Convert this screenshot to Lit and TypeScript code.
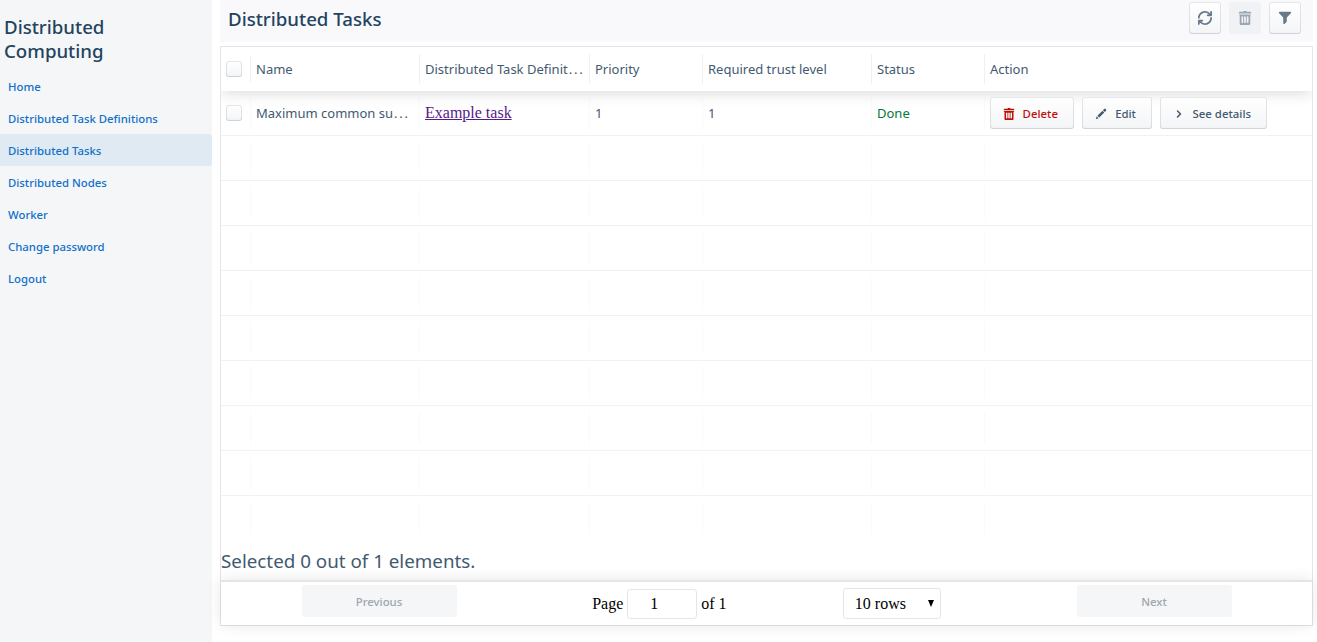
import { LitElement, html, css, svg } from "lit";
import { customElement } from "lit/decorators.js";

const icon = (d: string, cls = "icon") =>
  html`<svg class=${cls} viewBox="0 0 16 16" aria-hidden="true">${svg`<path fill-rule="evenodd" d=${d}></path>`}</svg>`;

const TRASH =
  "M14.49 3.99h-13c-.28 0-.5.22-.5.5s.22.5.5.5h.5v10c0 .55.45 1 1 1h10c.55 0 1-.45 1-1v-10h.5c.28 0 .5-.22.5-.5s-.22-.5-.5-.5zm-8.5 9c0 .55-.45 1-1 1s-1-.45-1-1v-6c0-.55.45-1 1-1s1 .45 1 1v6zm3 0c0 .55-.45 1-1 1s-1-.45-1-1v-6c0-.55.45-1 1-1s1 .45 1 1v6zm3 0c0 .55-.45 1-1 1s-1-.45-1-1v-6c0-.55.45-1 1-1s1 .45 1 1v6zm2-12h-4c0-.55-.45-1-1-1h-2c-.55 0-1 .45-1 1h-4c-.55 0-1 .45-1 1v1h14v-1c0-.55-.45-1-1-1z";
const EDIT =
  "M3.25 10.26l2.47 2.47 6.69-6.69-2.46-2.48-6.7 6.7zM.99 14.99l3.86-1.39-2.46-2.44-1.4 3.83zm12.25-14c-.48 0-.92.2-1.24.51l-1.44 1.44 2.47 2.47 1.44-1.44c.32-.32.51-.75.51-1.24.01-.95-.77-1.74-1.74-1.74z";
const CHEVRON =
  "M10.71 7.29l-4-4a1.003 1.003 0 00-1.42 1.42L8.59 8 5.3 11.29c-.19.18-.3.43-.3.71a1.003 1.003 0 001.71.71l4-4c.18-.18.29-.43.29-.71 0-.28-.11-.53-.29-.71z";
const REFRESH =
  "M14.99 6.99c-.55 0-1 .45-1 1 0 3.31-2.69 6-6 6-1.77 0-3.36-.78-4.46-2h1.46c.55 0 1-.45 1-1s-.45-1-1-1h-4c-.55 0-1 .45-1 1v4c0 .55.45 1 1 1s1-.45 1-1v-1.74a7.95 7.95 0 006 2.74c4.42 0 8-3.58 8-8 0-.55-.45-1-1-1zm0-7c-.55 0-1 .45-1 1v1.74a7.95 7.95 0 00-6-2.74c-4.42 0-8 3.58-8 8 0 .55.45 1 1 1s1-.45 1-1c0-3.31 2.69-6 6-6 1.77 0 3.36.78 4.46 2h-1.46c-.55 0-1 .45-1 1s.45 1 1 1h4c.55 0 1-.45 1-1v-4c0-.55-.45-1-1-1z";
const FILTER =
  "M13.99.99h-12a1.003 1.003 0 00-.71 1.71l4.71 4.71V14a1.003 1.003 0 001.71.71l2-2c.18-.18.29-.43.29-.71V7.41L14.7 2.7a1.003 1.003 0 00-.71-1.71z";

const NAV = [
  "Home",
  "Distributed Task Definitions",
  "Distributed Tasks",
  "Distributed Nodes",
  "Worker",
  "Change password",
  "Logout",
];

const dots = html`<span class="dots">...</span>`;

const COLUMNS = [
  html`Name`,
  html`Distributed Task Definit${dots}`,
  html`Priority`,
  html`Required trust level`,
  html`Status`,
  html`Action`,
];

@customElement("app-root")
export class AppRoot extends LitElement {
  static styles = css`
    :host {
      display: flex;
      height: 642px;
      overflow: hidden;
      background: #fff;
      color: #425a70;
      font-family: "Noto Sans", "Open Sans", sans-serif;
    }
    * {
      box-sizing: border-box;
    }
    .sidebar {
      width: 212px;
      flex: none;
      background: #f5f6f7;
      padding-top: 15px;
    }
    .brand {
      margin: 0 0 7px;
      padding-left: 4px;
      font-size: 18.65px;
      line-height: 24px;
      font-weight: 500;
      color: #234361;
    }
    .nav {
      display: flex;
      flex-direction: column;
    }
    .nav-item {
      height: 32px;
      line-height: 33px;
      padding-left: 8px;
      border-radius: 0 3px 3px 0;
      font-size: 11.35px;
      font-weight: 500;
      color: #1070ca;
      text-decoration: none;
      white-space: nowrap;
    }
    .nav-item.active {
      background: #e0eaf2;
    }
    .main {
      width: 1093px;
      margin-left: 8px;
      flex: none;
    }
    .bar {
      height: 42px;
      display: flex;
      align-items: flex-start;
      background: #f9f9fb;
      padding: 2px 12px 0 8px;
    }
    .title {
      margin: 0;
      flex: 1;
      font-size: 18.65px;
      line-height: 33px;
      font-weight: 500;
      color: #234361;
    }
    .tools {
      display: flex;
      gap: 8px;
    }
    .button {
      height: 32px;
      display: flex;
      align-items: center;
      border: 0;
      border-radius: 3px;
      padding: 0;
      background: linear-gradient(#fff, #f4f5f7);
      box-shadow: inset 0 0 0 1px rgba(67, 90, 111, 0.14),
        inset 0 -1px 1px 0 rgba(67, 90, 111, 0.08);
      color: #425a70;
      font: 500 11.4px/32px "Noto Sans", "Open Sans", sans-serif;
      white-space: nowrap;
    }
    .button.square {
      width: 32px;
      justify-content: center;
      color: #66788a;
    }
    .button.off {
      background: #f1f2f5;
      box-shadow: none;
      color: #9ba6b1;
    }
    .icon {
      width: 14px;
      height: 14px;
      fill: currentColor;
      flex: none;
    }
    .small {
      width: 12px;
      height: 12px;
      fill: currentColor;
      flex: none;
    }
    .table {
      margin-top: 4px;
      height: 580px;
      border: 1px solid rgba(0, 0, 0, 0.1);
      display: flex;
      flex-direction: column;
    }
    .body {
      height: 450px;
      flex: none;
    }
    .row {
      display: grid;
      grid-template-columns: 30px 169px 170px 113px 169px 113px 1fr;
      height: 45px;
      align-items: center;
      border-bottom: 1px solid rgba(0, 0, 0, 0.05);
    }
    .row:last-child {
      border-bottom-color: transparent;
    }
    .head {
      height: 44px;
      border: 0;
      box-shadow: 0 2px 15px 0 rgba(0, 0, 0, 0.15);
    }
    .header-clip {
      overflow: hidden;
      height: 64px;
      flex: none;
      margin-bottom: -20px;
      pointer-events: none;
    }
    .cell {
      height: 32px;
      padding-left: 5px;
      border-right: 1px solid rgba(0, 0, 0, 0.02);
      display: flex;
      align-items: center;
      min-width: 0;
      font-size: 13px;
    }
    .head .cell {
      height: 30px;
      border-color: rgba(0, 0, 0, 0.06);
    }
    .head .cell:first-child {
      height: 26px;
    }
    .cell:last-child {
      border-right: 0;
      gap: 8px;
    }
    .text {
      white-space: nowrap;
    }
    .dots {
      letter-spacing: 1.8px;
      margin-left: 1px;
    }
    .box {
      width: 16px;
      height: 16px;
      border-radius: 3px;
      background: linear-gradient(#fff, #f4f5f7);
      box-shadow: inset 0 0 0 1px rgba(67, 90, 111, 0.14),
        inset 0 -1px 1px 0 rgba(67, 90, 111, 0.1);
    }
    .done {
      color: #00783e;
    }
    .link {
      font: 16px "Liberation Serif", serif;
      color: #551a8b;
      text-decoration: underline;
    }
    .action {
      justify-content: space-between;
      padding: 1px 16px 0 13px;
    }
    .delete {
      width: 84px;
      color: #bf0e08;
    }
    .edit {
      width: 70px;
    }
    .details {
      width: 107px;
    }
    .selected {
      padding-top: 8px;
      font-size: 18.8px;
      line-height: 24px;
      height: 39px;
      flex: none;
      white-space: nowrap;
    }
    .pager {
      height: 45px;
      flex: none;
      display: flex;
      padding: 3px;
      border-top: 2px solid rgba(0, 0, 0, 0.1);
      background: #fff;
      box-shadow: 0 0 15px 0 rgba(0, 0, 0, 0.1);
      font: 16px "Liberation Serif", serif;
      color: #000;
    }
    .side {
      width: 310px;
      display: flex;
      justify-content: center;
    }
    .step {
      width: 155px;
      justify-content: center;
      padding-top: 1px;
      background: #f5f6f7;
      box-shadow: none;
      color: #9ba6b1;
    }
    .center {
      flex: 1;
      display: flex;
      align-items: center;
      justify-content: space-around;
    }
    .page {
      display: flex;
      align-items: center;
      gap: 4px;
    }
    .field {
      border: 1px solid rgba(0, 0, 0, 0.1);
      border-radius: 3px;
      height: 30px;
      width: 70px;
      line-height: 28px;
      padding-left: 22px;
    }
    .select {
      width: 98px;
      height: 31px;
      line-height: 30px;
      border: 1px solid rgba(0, 0, 0, 0.1);
      border-radius: 3px;
      display: flex;
      align-items: center;
      justify-content: space-between;
      padding: 0 6px 0 11px;
    }
    .arrow {
      width: 6px;
      height: 7px;
      margin-bottom: 1px;
    }
  `;

  render() {
    return html`
      <aside class="sidebar">
        <h1 class="brand">Distributed<br />Computing</h1>
        <nav class="nav">
          ${NAV.map(
            (n) => html`<a class="nav-item ${n === "Distributed Tasks" ? "active" : ""}">${n}</a>`
          )}
        </nav>
      </aside>
      <main class="main">
        <header class="bar">
          <h2 class="title">Distributed Tasks</h2>
          <div class="tools">
            <button class="button square">${icon(REFRESH)}</button>
            <button class="button square off">${icon(TRASH)}</button>
            <button class="button square">${icon(FILTER)}</button>
          </div>
        </header>
        <section class="table">
          <div class="header-clip">
            <div class="row head">
              <div class="cell"><span class="box"></span></div>
              ${COLUMNS.map((c) => html`<div class="cell"><span class="text">${c}</span></div>`)}
            </div>
          </div>
          <div class="body">
            <div class="row">
              <div class="cell"><span class="box"></span></div>
              <div class="cell"><span class="text">Maximum common su${dots}</span></div>
              <div class="cell"><a class="link">Example task</a></div>
              <div class="cell">1</div>
              <div class="cell">1</div>
              <div class="cell done">Done</div>
              <div class="cell">
                <button class="button action delete">${icon(TRASH, "small")}Delete</button>
                <button class="button action edit">${icon(EDIT, "small")}Edit</button>
                <button class="button action details">${icon(CHEVRON, "small")}See details</button>
              </div>
            </div>
            ${Array.from(
              { length: 9 },
              () => html`<div class="row">${Array.from({ length: 7 }, () => html`<div class="cell"></div>`)}</div>`
            )}
          </div>
          <div class="selected">Selected 0 out of 1 elements.</div>
          <footer class="pager">
            <div class="side"><button class="button step">Previous</button></div>
            <div class="center">
              <span class="page">Page <span class="field">1</span> of 1</span>
              <span class="select">10 rows
                <svg class="arrow" viewBox="0 0 6 7"><path d="M0 0H6L3 7Z"></path></svg>
              </span>
            </div>
            <div class="side"><button class="button step">Next</button></div>
          </footer>
        </section>
      </main>
    `;
  }
}
